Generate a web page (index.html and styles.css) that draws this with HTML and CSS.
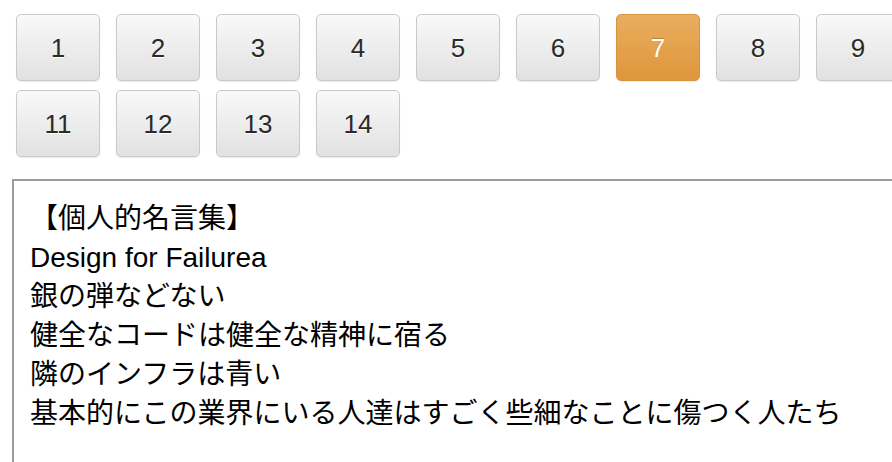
FILE: index.html
```html
<!DOCTYPE html>
<html lang="ja">
<head>
<meta charset="utf-8">
<link rel="stylesheet" href="styles.css">
</head>
<body>
<div class="page">
  <div class="pager">
    <button class="pg">1</button>
    <button class="pg">2</button>
    <button class="pg">3</button>
    <button class="pg">4</button>
    <button class="pg">5</button>
    <button class="pg">6</button>
    <button class="pg active">7</button>
    <button class="pg">8</button>
    <button class="pg">9</button>
    <button class="pg">10</button>
    <button class="pg">11</button>
    <button class="pg">12</button>
    <button class="pg">13</button>
    <button class="pg">14</button>
  </div>
  <div class="memo">
    <div class="line">【個人的名言集】</div>
    <div class="line">Design for Failurea</div>
    <div class="line">銀の弾などない</div>
    <div class="line">健全なコードは健全な精神に宿る</div>
    <div class="line">隣のインフラは青い</div>
    <div class="line">基本的にこの業界にいる人達はすごく些細なことに傷つく人たち</div>
  </div>
</div>
</body>
</html>
```
FILE: styles.css
```css
html, body {
  margin: 0;
  padding: 0;
  background: #fff;
  overflow: hidden;
  width: 892px;
  height: 462px;
}
.page {
  width: 1100px;
  font-family: "Liberation Sans", Arial, "Noto Sans CJK JP", sans-serif;
}
.pager {
  display: flex;
  flex-wrap: wrap;
  width: 1000px;
  box-sizing: border-box;
  padding: 14px 0 0 16px;
  gap: 9px 16px;
}
.pg {
  box-sizing: border-box;
  width: 84px;
  height: 67px;
  margin: 0;
  padding: 0;
  border: 1px solid #c9c9c9;
  border-radius: 5px;
  background: linear-gradient(to bottom, #f9f9f9 0%, #e1e1e1 100%);
  box-shadow: 0 1px 1px rgba(0,0,0,0.08);
  color: #2a2a2a;
  font-family: "Liberation Sans", Arial, sans-serif;
  font-size: 26px;
  line-height: 1;
  text-shadow: 0 1px 0 #fff;
}
.pg.active {
  border-color: #d9923f;
  background: linear-gradient(to bottom, #e9ae5e 0%, #df963c 100%);
  color: #fff;
  text-shadow: 0 -1px 0 rgba(150, 90, 20, 0.5);
}
.memo {
  margin: 22px 0 0 12px;
  border: 2px solid #9c9c9c;
  border-right: none;
  height: 320px;
  padding: 18px 16px 17px;
  font-size: 28px;
  line-height: 39px;
  color: #000;
}
.line {
  white-space: nowrap;
}
```
